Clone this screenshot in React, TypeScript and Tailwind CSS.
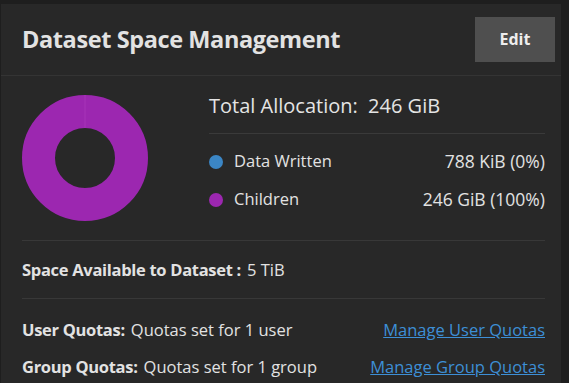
import React from "react";

const Donut = () => (
  <svg width="126" height="126" viewBox="0 0 126 126">
    <circle cx="63" cy="63" r="46.5" fill="none" stroke="#9c27b0" strokeWidth="33" />
    <line x1="63" y1="0" x2="63" y2="33" stroke="#a735b8" strokeWidth="1" />
  </svg>
);

export default function App() {
  return (
    <div className="w-[569px] h-[383px] bg-[#1e1e1e] pt-[4px] pl-[1px] overflow-hidden font-['Open_Sans',sans-serif]">
      <div className="w-[560px] h-[400px] bg-[#282828] text-[#e2e2e2]">
        <div className="h-[72px] flex items-center justify-between pl-[21px] pr-[6px] border-b border-[#343434]">
          <h2 className="text-[23.5px] font-bold tracking-[-0.4px]">Dataset Space Management</h2>
          <button className="w-[80px] h-[45px] bg-[#4f4f4f] text-[16px] font-bold text-[#eeeeee] mb-[1px]">
            Edit
          </button>
        </div>
        <div className="px-[21px] pr-[16px]">
          <div className="flex h-[165px] border-b border-[#383838]">
            <div className="w-[187px] pt-[19px]">
              <Donut />
            </div>
            <div className="flex-1">
              <div className="h-[58px] flex items-center border-b border-[#3a3a3a] pt-[2px] text-[20px] text-[#e4e4e4]">
                Total Allocation:&nbsp;&nbsp;246 GiB
              </div>
              <div className="flex items-center justify-between h-[25px] mt-[15px] text-[16.5px]">
                <div className="flex items-center">
                  <span className="w-[14px] h-[14px] rounded-full bg-[#3b86c5] mr-[11px]" />
                  Data Written
                </div>
                <span className="text-[17.5px]">788 KiB (0%)</span>
              </div>
              <div className="flex items-center justify-between h-[25px] mt-[13px] text-[16.5px]">
                <div className="flex items-center">
                  <span className="w-[14px] h-[14px] rounded-full bg-[#9c27b0] mr-[11px]" />
                  Children
                </div>
                <span className="text-[17.5px]">246 GiB (100%)</span>
              </div>
            </div>
          </div>
          <div className="h-[58px] flex items-center border-b border-[#383838] text-[16.5px] pt-[2px]">
            <span className="font-bold tracking-[-0.3px]">Space Available to Dataset :</span>
            <span className="ml-[6px]">5 TiB</span>
          </div>
          <div className="pt-[19px] text-[16.5px]">
            <div className="flex items-center justify-between h-[24px]">
              <div>
                <span className="font-bold tracking-[-0.3px]">User Quotas:</span>
                <span className="ml-[6px]">Quotas set for 1 user</span>
              </div>
              <a className="text-[#3d8fd6] underline">Manage User Quotas</a>
            </div>
            <div className="flex items-center justify-between h-[24px] mt-[13px]">
              <div>
                <span className="font-bold tracking-[-0.3px]">Group Quotas:</span>
                <span className="ml-[6px]">Quotas set for 1 group</span>
              </div>
              <a className="text-[#3d8fd6] underline">Manage Group Quotas</a>
            </div>
          </div>
        </div>
      </div>
    </div>
  );
}
